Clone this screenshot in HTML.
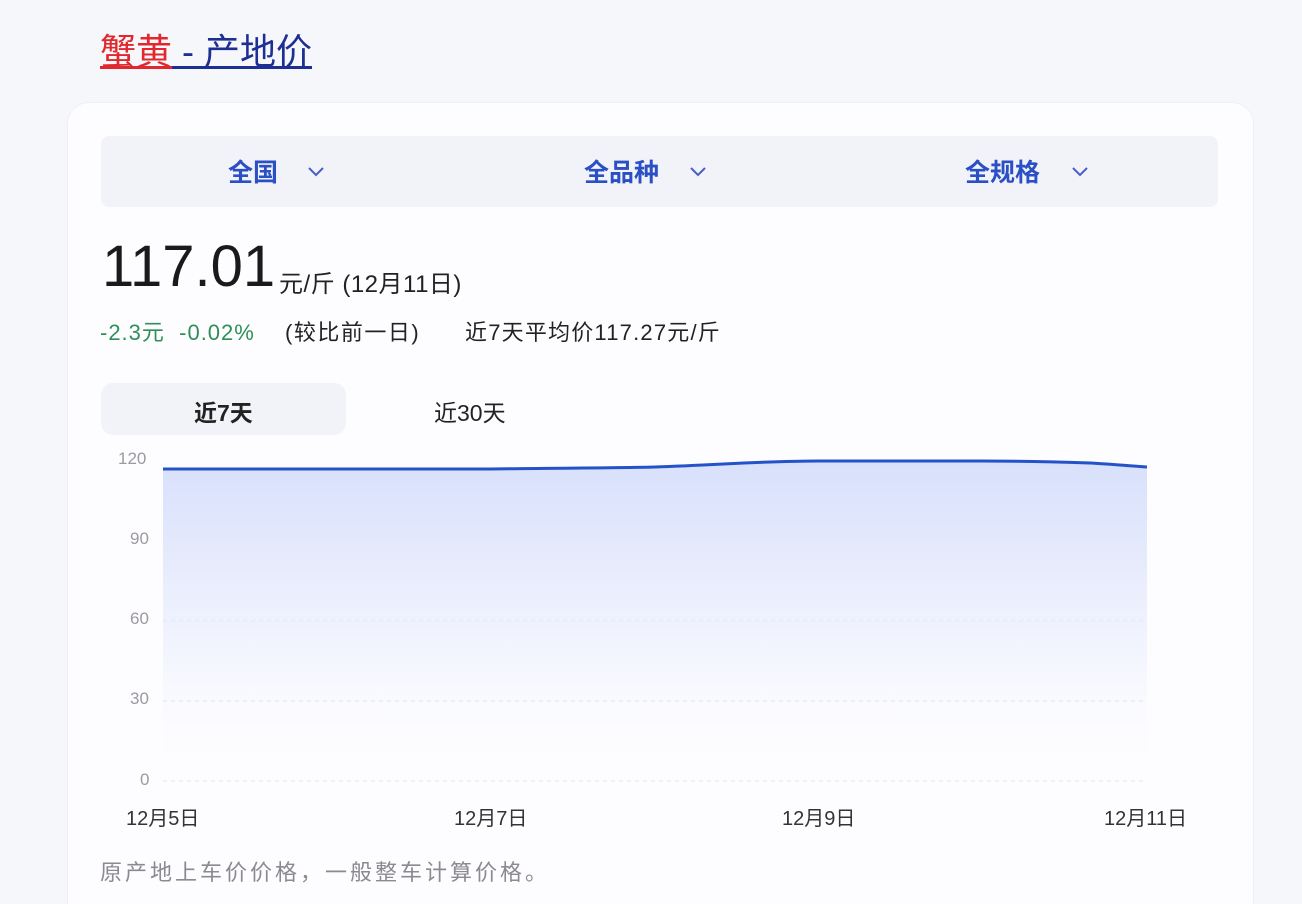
<!DOCTYPE html>
<html><head><meta charset="utf-8"><style>
html,body{margin:0;width:1302px;height:904px;overflow:hidden}
body{background:#f6f7fb;font-family:"Liberation Sans","Noto Sans CJK SC",sans-serif;position:relative}
.a{position:absolute;white-space:nowrap}
.card{position:absolute;left:67px;top:102px;width:1185px;height:830px;background:#fdfdff;border:1px solid #eef0f6;border-radius:22px}
.bar{position:absolute;left:101px;top:136px;width:1117px;height:71px;background:#f1f3f8;border-radius:8px}
.f{font-size:25px;font-weight:bold;color:#2b4fc4}
.yl{font-size:17px;color:#9a9aa2}
.xl{font-size:20px;color:#333}
</style></head><body>
<div class="a" style="left:100px;top:30px;font-size:36px;line-height:44px"><span style="color:#e0282e;text-decoration:underline">蟹黄</span><span style="color:#1e2f94;text-decoration:underline"> - 产地价</span></div>
<div class="card"></div>
<div class="bar"></div>
<div class="a f" style="left:228px;top:153px">全国</div>
<div class="a f" style="left:584px;top:153px">全品种</div>
<div class="a f" style="left:965px;top:153px">全规格</div>
<svg class="a" style="left:0;top:0" width="1302" height="904">
<g fill="none" stroke="#4a5fc4" stroke-width="2"><path d="M309 168l7 7 7-7"/><path d="M691 168l7 7 7-7"/><path d="M1073 168l7 7 7-7"/></g>
<defs><linearGradient id="g" x1="0" y1="0" x2="0" y2="1"><stop offset="0" stop-color="#d8e0fb"/><stop offset="0.6" stop-color="#f3f5fe"/><stop offset="1" stop-color="#fdfdff" stop-opacity="0"/></linearGradient></defs>
<path d="M163 469 L491 469 C560 468 620 468 655 467 C720 465 760 461 819 461 L983 461 C1030 461 1060 462 1090 463 C1110 464 1130 466 1147 467 L1147 781 L163 781Z" fill="url(#g)"/>
<g stroke="#e3e6f0" stroke-dasharray="4 4" stroke-width="1"><line x1="163" y1="541" x2="1147" y2="541"/><line x1="163" y1="621" x2="1147" y2="621"/><line x1="163" y1="701" x2="1147" y2="701"/><line x1="163" y1="781" x2="1147" y2="781"/></g>
<path d="M163 469 L491 469 C560 468 620 468 655 467 C720 465 760 461 819 461 L983 461 C1030 461 1060 462 1090 463 C1110 464 1130 466 1147 467" fill="none" stroke="#2453c9" stroke-width="3"/>
</svg>
<div class="a" style="left:102px;top:234px;font-size:58px;line-height:66px;color:#1a1a1a">117.01</div>
<div class="a" style="left:279px;top:264px;font-size:24px;letter-spacing:0.5px;color:#222">元/斤 (12月11日)</div>
<div class="a" style="left:100px;top:315px;font-size:22px;letter-spacing:1px;color:#2f8f57">-2.3元&nbsp; -0.02%</div>
<div class="a" style="left:285px;top:315px;font-size:22px;letter-spacing:1.5px;color:#222">(较比前一日)</div>
<div class="a" style="left:465px;top:315px;font-size:22px;letter-spacing:1.2px;color:#222">近7天平均价117.27元/斤</div>
<div class="a" style="left:101px;top:383px;width:245px;height:52px;background:#f1f3f8;border-radius:12px"></div>
<div class="a" style="left:194px;top:394px;font-size:23px;font-weight:bold;color:#222">近7天</div>
<div class="a" style="left:434px;top:394px;font-size:23px;color:#222">近30天</div>
<div class="a yl" style="left:118px;top:449px">120</div>
<div class="a yl" style="left:130px;top:529px">90</div>
<div class="a yl" style="left:130px;top:609px">60</div>
<div class="a yl" style="left:130px;top:689px">30</div>
<div class="a yl" style="left:140px;top:770px">0</div>
<div class="a xl" style="left:126px;top:802px">12月5日</div>
<div class="a xl" style="left:454px;top:802px">12月7日</div>
<div class="a xl" style="left:782px;top:802px">12月9日</div>
<div class="a xl" style="left:1104px;top:802px">12月11日</div>
<div class="a" style="left:100px;top:855px;font-size:22px;letter-spacing:3px;color:#8a8a90">原产地上车价价格，一般整车计算价格。</div>
</body></html>
